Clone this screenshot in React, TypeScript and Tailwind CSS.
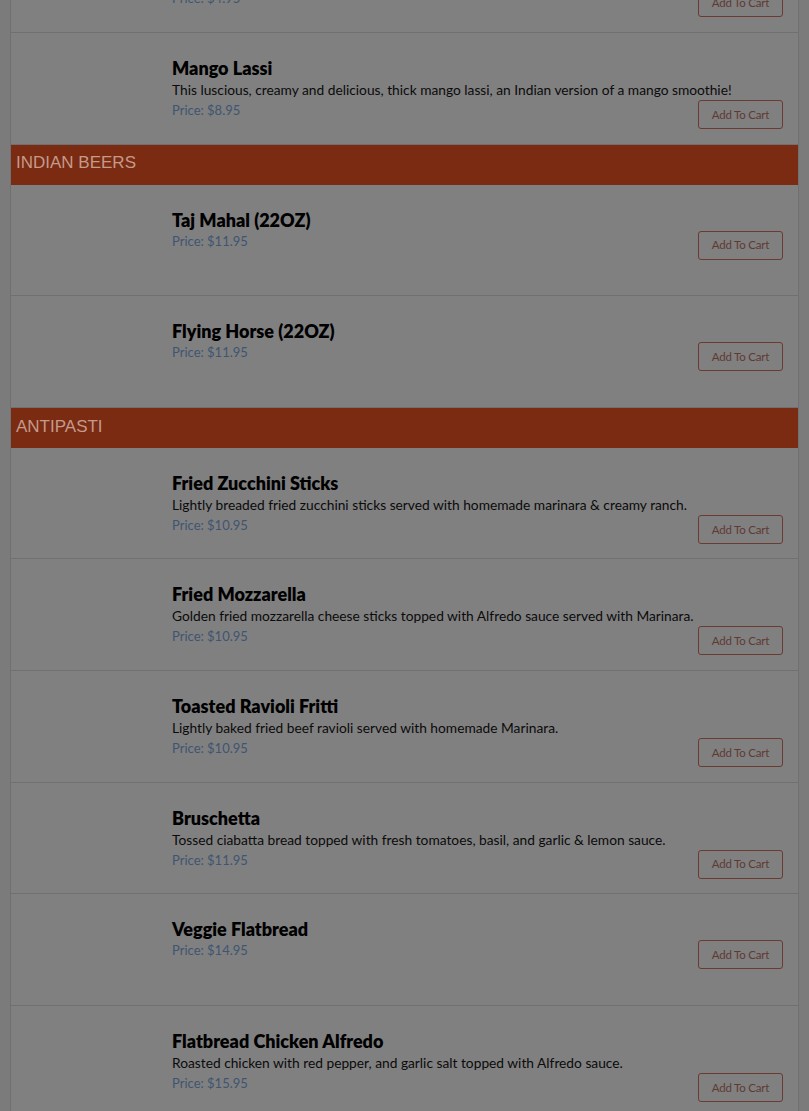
type Item = { name: string; desc?: string; price: string };

const drinksTail: Item[] = [
  { name: 'Mango Lassi', desc: 'This luscious, creamy and delicious, thick mango lassi, an Indian version of a mango smoothie!', price: '$8.95' },
];

const beers: Item[] = [
  { name: 'Taj Mahal (22OZ)', price: '$11.95' },
  { name: 'Flying Horse (22OZ)', price: '$11.95' },
];

const antipasti: Item[] = [
  { name: 'Fried Zucchini Sticks', desc: 'Lightly breaded fried zucchini sticks served with homemade marinara & creamy ranch.', price: '$10.95' },
  { name: 'Fried Mozzarella', desc: 'Golden fried mozzarella cheese sticks topped with Alfredo sauce served with Marinara.', price: '$10.95' },
  { name: 'Toasted Ravioli Fritti', desc: 'Lightly baked fried beef ravioli served with homemade Marinara.', price: '$10.95' },
  { name: 'Bruschetta', desc: 'Tossed ciabatta bread topped with fresh tomatoes, basil, and garlic & lemon sauce.', price: '$11.95' },
  { name: 'Veggie Flatbread', price: '$14.95' },
  { name: 'Flatbread Chicken Alfredo', desc: 'Roasted chicken with red pepper, and garlic salt topped with Alfredo sauce.', price: '$15.95' },
];

function MenuRow({ item }: { item: Item }) {
  return (
    <div className="flex h-[111.6px] shrink-0 border-b border-[#707070]">
      {/* image slot, empty while pictures load */}
      <div className="w-[161px] shrink-0" />
      <div className="flex-1 pt-[24px] pr-[15px]">
        <h3 className="text-[18px] leading-[22px] font-extrabold text-black">{item.name}</h3>
        {item.desc && <p className="text-[13.75px] leading-[21px] text-[#0b0b0b]">{item.desc}</p>}
        <div className="flex items-start justify-between">
          <span className="text-[13px] leading-[21px] text-[#3f5570]">Price: {item.price}</span>
          <button className="h-[29px] w-[85px] rounded-[3px] border border-[#6b3b31] text-[11.5px] text-[#5e3a33] tracking-[-0.2px]">
            Add To Cart
          </button>
        </div>
      </div>
    </div>
  );
}

function Category({ title }: { title: string }) {
  return (
    <div className="flex h-[40px] shrink-0 items-center bg-[#7a2b12] px-[5px] pb-[3px]">
      <h2 className="text-[17px] text-[#c49a8a] uppercase" style={{ fontFamily: '"Liberation Sans", Arial, sans-serif' }}>
        {title}
      </h2>
    </div>
  );
}

export default function App() {
  return (
    <div className="h-[1111px] overflow-hidden bg-[#7b7b7b] px-[10px]" style={{ fontFamily: 'Lato, "Noto Sans", sans-serif' }}>
      <div className="-mt-[78.6px] flex flex-col border-x border-[#707070] bg-[#808080]">
        <MenuRow item={{ name: 'Masala Chai', desc: 'Traditional Indian spiced tea brewed with milk and cardamom.', price: '$4.95' }} />
        {drinksTail.map((it) => (
          <MenuRow key={it.name} item={it} />
        ))}
        <Category title="Indian Beers" />
        {beers.map((it) => (
          <MenuRow key={it.name} item={it} />
        ))}
        <Category title="Antipasti" />
        {antipasti.map((it) => (
          <MenuRow key={it.name} item={it} />
        ))}
      </div>
    </div>
  );
}
